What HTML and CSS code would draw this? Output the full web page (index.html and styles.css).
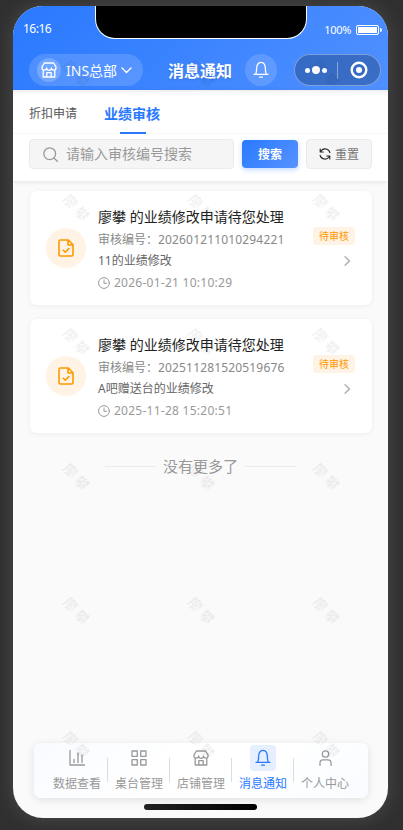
FILE: index.html
```html
<!DOCTYPE html>
<html lang="zh-CN">
<head>
<meta charset="utf-8">
<title>消息通知</title>
<link rel="stylesheet" href="styles.css">
</head>
<body>
<svg class="defs" width="0" height="0" aria-hidden="true">
  <symbol id="shop" viewBox="0 0 16 16"><path d="M3.400 1h9.200l2.400 3.800v1a2.200 2.200 0 0 1-4.600.2 2.400 2.400 0 0 1-4.800 0A2.200 2.200 0 0 1 1 5.800v-1zM2.200 8.500V15h11.600V8.500M5.800 15v-4.300h4.400V15"/></symbol>
  <symbol id="bell" viewBox="0 0 16 18"><path d="M1 13.300h14M2.600 13.200c.8-1.400 1-2.700 1-5C3.600 4 5.200 1.300 8 1.300s4.400 2.700 4.400 6.900c0 2.300.2 3.600 1 5M6.600 16.200h2.800"/></symbol>
  <symbol id="doc" viewBox="0 0 16 18"><path d="M10.300 1H2.500A1.500 1.500 0 0 0 1 2.500v13A1.500 1.500 0 0 0 2.500 17h11a1.500 1.500 0 0 0 1.500-1.500V5.700zM10 1.200V6h4.800M5.300 11.200l2 2 3.600-3.600"/></symbol>
  <symbol id="clock" viewBox="0 0 12 12"><circle cx="6" cy="6" r="5.400"/><path d="M6 2.800v3.500h2.500"/></symbol>
</svg>
<div class="phone">
  <header class="header">
    <div class="status">
      <span class="time">16:16</span>
      <span class="battery">100% <i class="cell"></i></span>
    </div>
    <div class="navbar">
      <div class="store"><span class="store-icon"><svg width="16" height="16"><use href="#shop"/></svg></span><span class="store-name">INS总部</span><svg class="down" width="11" height="7" viewBox="0 0 11 7"><path d="M1 1l4.500 4.500L10 1"/></svg></div>
      <h1>消息通知</h1>
      <div class="bell"><svg width="16" height="18"><use href="#bell"/></svg></div>
      <div class="capsule">
        <span class="dots"><i></i><i></i><i></i></span><b></b>
        <svg width="18" height="18" viewBox="0 0 18 18"><circle cx="9" cy="9" r="7.300"/><circle class="core" cx="9" cy="9" r="3"/></svg>
      </div>
    </div>
  </header>
  <div class="notch"></div>
  <section class="filters">
    <nav class="tabs"><span>折扣申请</span><span class="on">业绩审核</span></nav>
    <div class="search">
      <div class="field"><svg width="15" height="15" viewBox="0 0 15 15"><circle cx="6.700" cy="6.700" r="5.900"/><path d="M11 11l3.300 3.300"/></svg><span>请输入审核编号搜索</span></div>
      <div class="go">搜索</div>
      <div class="reset"><svg width="12" height="12" viewBox="0 0 12 12"><path d="M10.900 4.700A5 5 0 0 0 2 3M1.100 7.300A5 5 0 0 0 10 9M1.200 1v3h3M10.800 11V8h-3"/></svg><span>重置</span></div>
    </div>
  </section>
  <main class="list">
    <article class="card">
      <div class="avatar"><svg width="16" height="18"><use href="#doc"/></svg></div>
      <div class="info">
        <h2>廖攀 的业绩修改申请待您处理</h2>
        <p class="num">审核编号：<span>202601211010294221</span></p>
        <p class="desc">11的业绩修改</p>
        <p class="date"><svg width="12" height="12"><use href="#clock"/></svg><span>2026-01-21 10:10:29</span></p>
      </div>
      <div class="state"><span class="tag">待审核</span><svg width="7" height="10" viewBox="0 0 7 10"><path d="M1 .7L5.500 5 1 9.300"/></svg></div>
    </article>
    <article class="card">
      <div class="avatar"><svg width="16" height="18"><use href="#doc"/></svg></div>
      <div class="info">
        <h2>廖攀 的业绩修改申请待您处理</h2>
        <p class="num">审核编号：<span>202511281520519676</span></p>
        <p class="desc">A吧赠送台的业绩修改</p>
        <p class="date"><svg width="12" height="12"><use href="#clock"/></svg><span>2025-11-28 15:20:51</span></p>
      </div>
      <div class="state"><span class="tag">待审核</span><svg width="7" height="10" viewBox="0 0 7 10"><path d="M1 .7L5.500 5 1 9.300"/></svg></div>
    </article>
    <div class="end">没有更多了</div>
  </main>
  <footer class="tabbar">
    <div class="item"><i><svg width="16" height="16" viewBox="0 0 16 16"><path d="M1 .500V15h14.500M5 9.500V12.500M9 3v9.500M13 5v7.500"/></svg></i><span>数据查看</span></div>
    <div class="item"><i><svg width="16" height="16" viewBox="0 0 16 16"><path d="M1 1h5.300v5.300H1zM9.700 1H15v5.300H9.700zM1 9.700h5.300V15H1zM9.700 9.700H15V15H9.700z"/></svg></i><span>桌台管理</span></div>
    <div class="item"><i><svg width="16" height="16"><use href="#shop"/></svg></i><span>店铺管理</span></div>
    <div class="item active"><i><svg width="16" height="18"><use href="#bell"/></svg></i><span>消息通知</span></div>
    <div class="item"><i><svg width="13" height="16" viewBox="0 0 13 16"><circle cx="6.500" cy="4" r="3.200"/><path d="M1 15.500v-2.700a3 3 0 0 1 3-3h5a3 3 0 0 1 3 3v2.700"/></svg></i><span>个人中心</span></div>
  </footer>
  <div class="home"></div>
  <div class="marks" aria-hidden="true">
    <span>廖攀</span><span>廖攀</span><span>廖攀</span>
    <span>廖攀</span><span>廖攀</span><span>廖攀</span>
    <span>廖攀</span><span>廖攀</span><span>廖攀</span>
    <span>廖攀</span><span>廖攀</span><span>廖攀</span>
    <span>廖攀</span><span>廖攀</span><span>廖攀</span>
    <span>廖攀</span><span>廖攀</span><span>廖攀</span>
  </div>
</div>
</body>
</html>
```
FILE: styles.css
```css
* { box-sizing: border-box; margin: 0; padding: 0; }
body {
  width: 403px; height: 830px; padding: 6px 0 0 13px; overflow: hidden;
  background: #303030;
  font-family: "Noto Sans", "Noto Sans CJK SC", sans-serif;
}
i { font-style: normal; }
svg { display: block; flex: none; fill: none; stroke: currentColor; stroke-width: 1.3; stroke-linecap: round; stroke-linejoin: round; }
.defs { position: absolute; }
.phone {
  position: relative; display: flex; flex-direction: column;
  width: 375px; height: 812px; border-radius: 30px; overflow: hidden;
  background: #fafafa; box-shadow: 0 0 18px rgba(110, 110, 110, .45);
}
.header { height: 84px; flex: none; color: #fff; background: linear-gradient(135deg, #2979ff, #5090ff); }
.status { display: flex; justify-content: space-between; height: 48px; padding: 14px 9px 0 10px; font-size: 12px; line-height: 18px; }
.time { letter-spacing: -.5px; }
.battery { display: flex; gap: 5px; font-size: 11px; line-height: 20px; letter-spacing: -.3px; }
.cell { position: relative; width: 23px; height: 10px; margin-top: 5px; border: 1px solid #fff; border-radius: 2px; background: #fff; box-shadow: inset 0 0 0 1px #4888ff; }
.cell::after { content: ""; position: absolute; right: -4px; top: 2px; width: 2px; height: 4px; border-radius: 0 2px 2px 0; background: #fff; }
.time, .battery { margin-top: -0px; }
.notch { position: absolute; left: 82px; top: 0; width: 212px; height: 33px; background: #000; border: 1px solid #fff; border-top: 0; border-radius: 0 0 20px 20px; }
.navbar { display: flex; align-items: center; height: 32px; padding-left: 16px; }
.store { display: flex; align-items: center; width: 114px; height: 32px; padding-left: 8px; border-radius: 16px; background: rgba(255, 255, 255, .15); }
.store-icon { display: grid; place-items: center; width: 24px; height: 24px; border-radius: 50%; background: rgba(255, 255, 255, .2); }
.store-name { width: 52px; margin: 0 3px 0 5px; padding-top: 1px; font-size: 14px; line-height: 20px; white-space: nowrap; }
.down { stroke-width: 1.4; }
h1 { width: 64px; margin-left: 25px; padding-top: 1px; font-size: 16px; line-height: 22px; font-weight: 700; white-space: nowrap; text-shadow: 0 1px 2px rgba(0, 0, 0, .15); }
.bell { display: grid; place-items: center; width: 32px; height: 32px; margin-left: 13px; border-radius: 50%; background: rgba(255, 255, 255, .15); }
.capsule { display: flex; align-items: center; width: 87px; height: 32px; margin-left: 17px; padding-left: 10px; border: 1px solid rgba(255, 255, 255, .35); border-radius: 16px; background: rgba(30, 60, 110, .4); }
.dots { display: flex; align-items: center; gap: 2px; width: 32px; }
.dots i { width: 5px; height: 5px; border-radius: 50%; background: #fff; }
.dots i:nth-child(2) { width: 8px; height: 8px; }
.capsule b { width: 1px; height: 17px; margin-right: 12px; background: rgba(255, 255, 255, .4); }
.capsule svg { stroke-width: 2.4; }
.core { fill: #fff; stroke: none; }
.filters { flex: none; height: 91px; background: #fff; box-shadow: 0 1px 5px rgba(0, 0, 0, .09); }
.tabs { display: flex; gap: 27px; height: 44px; padding: 14px 16px 0; border-bottom: 1px solid #f7f7f7; font-size: 12px; line-height: 20px; color: #555; box-shadow: inset 0 4px 5px -3px rgba(0, 0, 0, .1); }
.tabs .on { position: relative; font-size: 14px; font-weight: 700; color: #2979ff; }
.tabs .on::after { content: ""; position: absolute; left: 16px; top: 28px; width: 26px; height: 2px; background: #2979ff; }
.search { display: flex; align-items: center; gap: 8px; height: 40px; padding: 0 16px; }
.field, .reset { display: flex; align-items: center; height: 30px; border: 1px solid #ebebeb; border-radius: 4px; background: #f5f5f5; color: #999; }
.field { width: 205px; padding-left: 13px; gap: 8px; font-size: 14px; line-height: 20px; }
.go { width: 56px; height: 28px; border-radius: 4px; color: #fff; font-size: 12px; line-height: 30px; font-weight: 700; text-align: center; background: linear-gradient(135deg, #2979ff, #5793ff); box-shadow: 0 2px 5px rgba(41, 121, 255, .28); }
.reset { width: 66px; justify-content: center; gap: 4px; font-size: 12px; color: #777; }
.reset svg { color: #222; stroke-width: 1.1; }
.list { padding: 10px 16px 0 17px; }
.card { display: flex; align-items: center; height: 114px; margin-bottom: 14px; padding: 0 16px; border-radius: 7px; background: #fff; box-shadow: 0 1px 5px rgba(0, 0, 0, .06); }
.avatar { display: grid; place-items: center; flex: none; width: 40px; height: 40px; border-radius: 50%; background: #fff3e5; color: #ff9800; }
.avatar svg { stroke-width: 1.6; }
.info { width: 200px; margin-left: 12px; padding-top: 3px; color: #888; font-size: 12px; line-height: 20px; white-space: nowrap; }
h2 { font-size: 14px; line-height: 22px; font-weight: 400; color: #222; margin-bottom: 2px; }
.num { height: 21px; }
.num span { letter-spacing: .16px; }
.desc { height: 22px; color: #666; }
.date { display: flex; align-items: center; gap: 4px; height: 20px; color: #999; letter-spacing: .26px; }
.date svg { stroke-width: 1; }
.state { display: flex; flex-direction: column; align-items: flex-end; flex: none; width: 58px; margin: -3px 1px 0 auto; }
.tag { width: 42px; height: 18px; border-radius: 4px; background: #fff3e5; color: #ff9800; font-size: 10px; line-height: 19px; text-align: center; }
.state svg { margin: 11px 4px 0 0; color: #aaa; }
.end { display: flex; align-items: center; justify-content: center; gap: 7px; height: 22px; margin-top: 22px; padding-right: 1px; font-size: 15px; line-height: 22px; color: #999; }
.end::before, .end::after { content: ""; width: 51px; height: 1px; background: #ebebeb; }
.tabbar { display: flex; flex: none; width: 334px; height: 55px; margin: auto 20px 20px 21px; padding: 2px 12px 0; border-radius: 7px; background: linear-gradient(135deg, #f8fbff, #fff 40%, #fff 65%, #f9fcff); box-shadow: 0 2px 8px rgba(0, 0, 0, .1); }
.item { position: relative; display: flex; flex-direction: column; align-items: center; width: 62px; flex: none; color: #999; font-size: 12px; line-height: 18px; }
.item i { display: grid; place-items: center; width: 26px; height: 26px; margin-bottom: 4px; border-radius: 4px; }
.item + .item::before { content: ""; position: absolute; left: -1px; top: 13px; width: 1px; height: 24px; background: #ddd; }
.active { color: #2979ff; }
.active i { background: #e5efff; }
.home { position: absolute; left: 131px; top: 798px; width: 113px; height: 6px; border-radius: 3px; background: linear-gradient(90deg, #222, #000); }
.marks { position: absolute; inset: 41px 0 auto 0; display: grid; grid-template-columns: repeat(3, 125px); grid-auto-rows: 134.200px; pointer-events: none; }
.marks span { width: 34px; height: 18px; margin: 19px 0 0 47px; font-size: 14px; line-height: 18px; font-weight: 700; letter-spacing: 3px; white-space: nowrap; color: rgba(0, 0, 0, .065); transform: rotate(47deg); }
```
